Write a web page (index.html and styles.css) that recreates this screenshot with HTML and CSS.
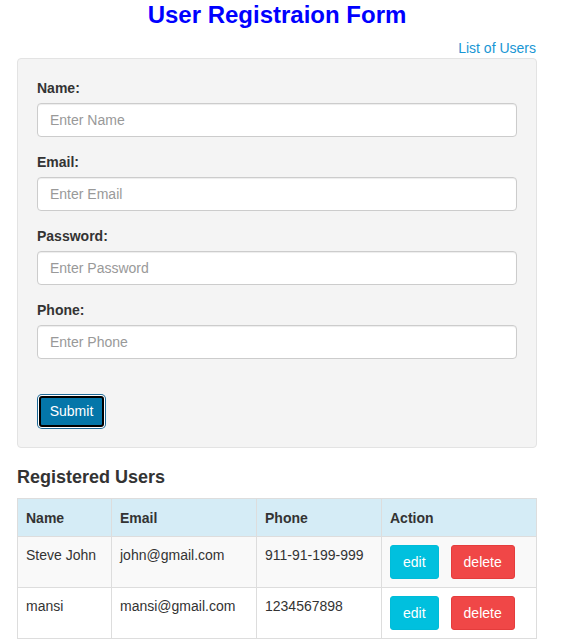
FILE: index.html
```html
<!DOCTYPE html>
<html>
<head>
<meta charset="utf-8">
<link rel="stylesheet" href="styles.css">
</head>
<body>
<div class="page">
  <h1 class="title">User Registraion Form</h1>
  <div class="toplink"><a href="#">List of Users</a></div>
  <form class="well">
    <div class="group">
      <label>Name:</label>
      <input type="text" placeholder="Enter Name">
    </div>
    <div class="group">
      <label>Email:</label>
      <input type="text" placeholder="Enter Email">
    </div>
    <div class="group">
      <label>Password:</label>
      <input type="password" placeholder="Enter Password">
    </div>
    <div class="group">
      <label>Phone:</label>
      <input type="text" placeholder="Enter Phone">
    </div>
    <button type="button" class="submit">Submit</button>
  </form>
  <h3 class="subtitle">Registered Users</h3>
  <table class="users">
    <thead>
      <tr><th class="c1">Name</th><th class="c2">Email</th><th class="c3">Phone</th><th class="c4">Action</th></tr>
    </thead>
    <tbody>
      <tr class="odd">
        <td>Steve John</td><td>john@gmail.com</td><td>911-91-199-999</td>
        <td><span class="btn edit">edit</span><span class="btn del">delete</span></td>
      </tr>
      <tr>
        <td>mansi</td><td>mansi@gmail.com</td><td>1234567898</td>
        <td><span class="btn edit">edit</span><span class="btn del">delete</span></td>
      </tr>
    </tbody>
  </table>
</div>
</body>
</html>
```
FILE: styles.css
```css
* { box-sizing: border-box; }
html, body { margin: 0; padding: 0; background: #fff; }
body {
  font-family: "Liberation Sans", Arial, sans-serif;
  font-size: 14px;
  line-height: 20px;
  color: #333;
}
.page {
  width: 520px;
  margin-left: 17px;
}
.title {
  margin: 0;
  padding-top: 1px;
  height: 33px;
  font-size: 24px;
  line-height: 28px;
  font-weight: bold;
  color: #0000ff;
  text-align: center;
}
.toplink {
  text-align: right;
  height: 25px;
  padding-top: 5px;
  line-height: 20px;
}
.toplink a {
  color: #1896d4;
  text-decoration: none;
  margin-right: 1px;
}
.well {
  display: block;
  margin: 0;
  background: #f4f4f4;
  border: 1px solid #e3e3e3;
  border-radius: 4px;
  padding: 19px 19px 20px 19px;
}
.group {
  margin-bottom: 15px;
}
.group label {
  display: block;
  font-weight: bold;
  margin-bottom: 5px;
  height: 20px;
}
.group input {
  display: block;
  width: 100%;
  height: 34px;
  padding: 6px 12px;
  font-family: "Liberation Sans", Arial, sans-serif;
  font-size: 14px;
  color: #555;
  background: #fff;
  border: 1px solid #ccc;
  border-radius: 4px;
  box-shadow: inset 0 1px 1px rgba(0,0,0,.075);
  outline: none;
}
.group input::placeholder { color: #999; }
.submit {
  display: block;
  margin: 37px 0 0 2px;
  width: 65px;
  height: 31px;
  padding: 0 0 1px 0;
  font-family: "Liberation Sans", Arial, sans-serif;
  font-size: 14px;
  color: #fff;
  background: #0476a9;
  border: 2px solid #000;
  border-radius: 3px;
  box-shadow: 0 0 0 1px #fff, 0 0 0 2px #1d6a98;
}
.subtitle {
  margin: 0;
  padding-top: 18px;
  height: 50px;
  font-size: 18px;
  line-height: 22px;
  font-weight: bold;
  color: #333;
}
.users {
  width: 520px;
  border-collapse: collapse;
  border: 1px solid #ddd;
}
.users th, .users td {
  border: 1px solid #ddd;
  text-align: left;
  vertical-align: top;
  padding: 8px 8px;
  line-height: 20px;
}
.users th {
  background: #d5ecf6;
  font-weight: bold;
  height: 38px;
  padding-top: 9px;
}
.users td { height: 51px; }
.users tr.odd td { background: #f9f9f9; }
.c1 { width: 94px; }
.c2 { width: 145px; }
.c3 { width: 125px; }
.btn {
  display: inline-block;
  height: 34px;
  line-height: 32px;
  padding: 0 12px;
  color: #fff;
  border: 1px solid transparent;
  border-radius: 3px;
  font-size: 14px;
}
.edit { background: #00c0de; border-color: #00bcd8; }
.del { background: #f04747; border-color: #e53c3c; margin-left: 12px; }
```
